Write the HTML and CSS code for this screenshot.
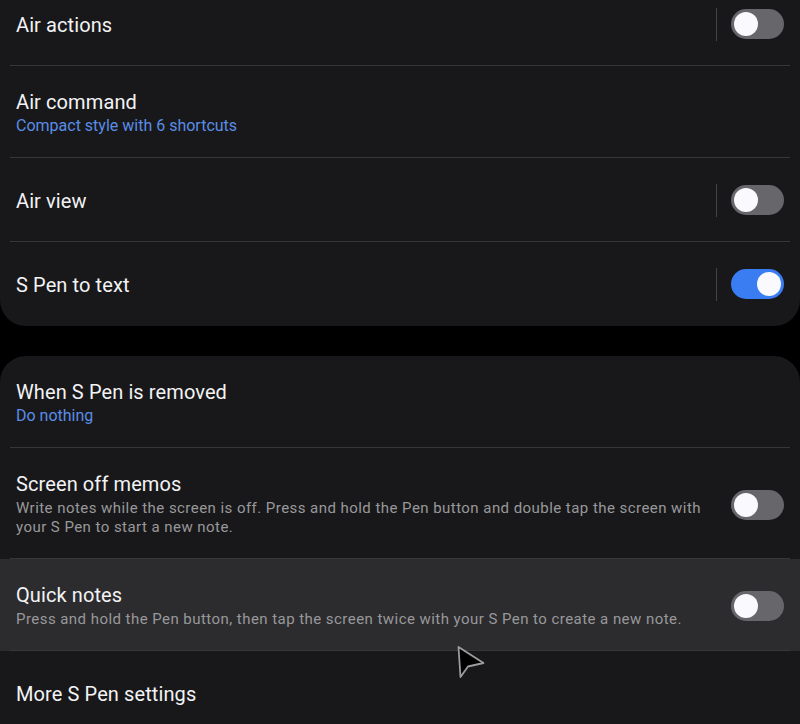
FILE: index.html
```html
<!DOCTYPE html>
<html lang="en">
<head>
<meta charset="utf-8">
<title>S Pen settings</title>
<link rel="stylesheet" href="styles.css">
</head>
<body>
<div class="page">
  <section class="card card-top">
    <div class="row row-single">
      <div class="text"><div class="title">Air actions</div></div>
      <span class="vsep"></span>
      <span class="toggle"></span>
    </div>
    <div class="row row-double">
      <div class="text">
        <div class="title">Air command</div>
        <div class="sub">Compact style with 6 shortcuts</div>
      </div>
    </div>
    <div class="row row-single">
      <div class="text"><div class="title">Air view</div></div>
      <span class="vsep"></span>
      <span class="toggle"></span>
    </div>
    <div class="row row-single last">
      <div class="text"><div class="title">S Pen to text</div></div>
      <span class="vsep"></span>
      <span class="toggle on"></span>
    </div>
  </section>

  <section class="card card-bottom">
    <div class="row row-double">
      <div class="text">
        <div class="title">When S Pen is removed</div>
        <div class="sub">Do nothing</div>
      </div>
    </div>
    <div class="row row-desc">
      <div class="text">
        <div class="title">Screen off memos</div>
        <div class="desc">Write notes while the screen is off. Press and hold the Pen button and double tap the screen with your S Pen to start a new note.</div>
      </div>
      <span class="toggle"></span>
    </div>
    <div class="row row-desc highlight">
      <div class="text">
        <div class="title">Quick notes</div>
        <div class="desc">Press and hold the Pen button, then tap the screen twice with your S Pen to create a new note.</div>
      </div>
      <span class="toggle"></span>
    </div>
    <div class="row row-single last">
      <div class="text"><div class="title">More S Pen settings</div></div>
    </div>
  </section>

  <svg class="cursor" width="32" height="38" viewBox="0 0 32 38" aria-hidden="true">
    <path d="M3.5 3 L5.5 33 L13 22.5 L28.5 19 Z" fill="#000" stroke="#9c9c9c" stroke-width="1.8" stroke-linejoin="round"/>
  </svg>
</div>
</body>
</html>
```

FILE: styles.css
```css
html, body {
  margin: 0;
  padding: 0;
  background: #000;
}
body {
  font-family: Roboto, "Noto Sans", sans-serif;
  color: #f3f3f5;
  overflow: hidden;
  height: 724px;
}
.page {
  position: relative;
  margin-top: -18px;
}
.card {
  background: #18181a;
  overflow: hidden;
}
.card-top {
  border-radius: 0 0 26px 26px;
  margin-bottom: 30px;
}
.card-bottom {
  border-radius: 26px 26px 0 0;
}
.row {
  position: relative;
  display: flex;
  align-items: center;
  padding: 0 16px;
  box-sizing: border-box;
}
.row::after {
  content: "";
  position: absolute;
  left: 10px;
  right: 10px;
  bottom: 0;
  height: 1px;
  background: #37373a;
}
.row.last::after {
  display: none;
}
.row-single {
  height: 84px;
  padding-top: 2px;
}
.row-single .vsep,
.row-single .toggle {
  margin-top: -2px;
}
.row-double {
  height: 92px;
  align-items: flex-start;
  padding-top: 24px;
}
.row-desc {
  align-items: flex-start;
  padding-top: 24px;
  padding-bottom: 22px;
}
.row-desc .toggle {
  align-self: center;
}
.highlight {
  background: #2c2c2e;
}
.text {
  flex: 1;
  min-width: 0;
}
.row-desc .text {
  padding-right: 24px;
}
.title {
  font-size: 20px;
  line-height: 24px;
  color: #f3f3f5;
  letter-spacing: 0.1px;
}
.sub {
  font-size: 16px;
  line-height: 24px;
  color: #5a8de6;
}
.desc {
  margin-top: 3px;
  font-size: 15px;
  line-height: 19px;
  letter-spacing: 0.45px;
  color: #98989b;
}
.vsep {
  width: 1px;
  height: 33px;
  background: #444447;
  margin-right: 14px;
}
.toggle {
  position: relative;
  flex: none;
  width: 53px;
  height: 30px;
  border-radius: 15px;
  background: #67676b;
}
.toggle::after {
  content: "";
  position: absolute;
  top: 3px;
  left: 3px;
  width: 24px;
  height: 24px;
  border-radius: 50%;
  background: #fafafe;
}
.toggle.on {
  background: #3a7cf2;
}
.toggle.on::after {
  left: 26px;
}
.cursor {
  position: absolute;
  left: 455px;
  top: 662px;
}
```
